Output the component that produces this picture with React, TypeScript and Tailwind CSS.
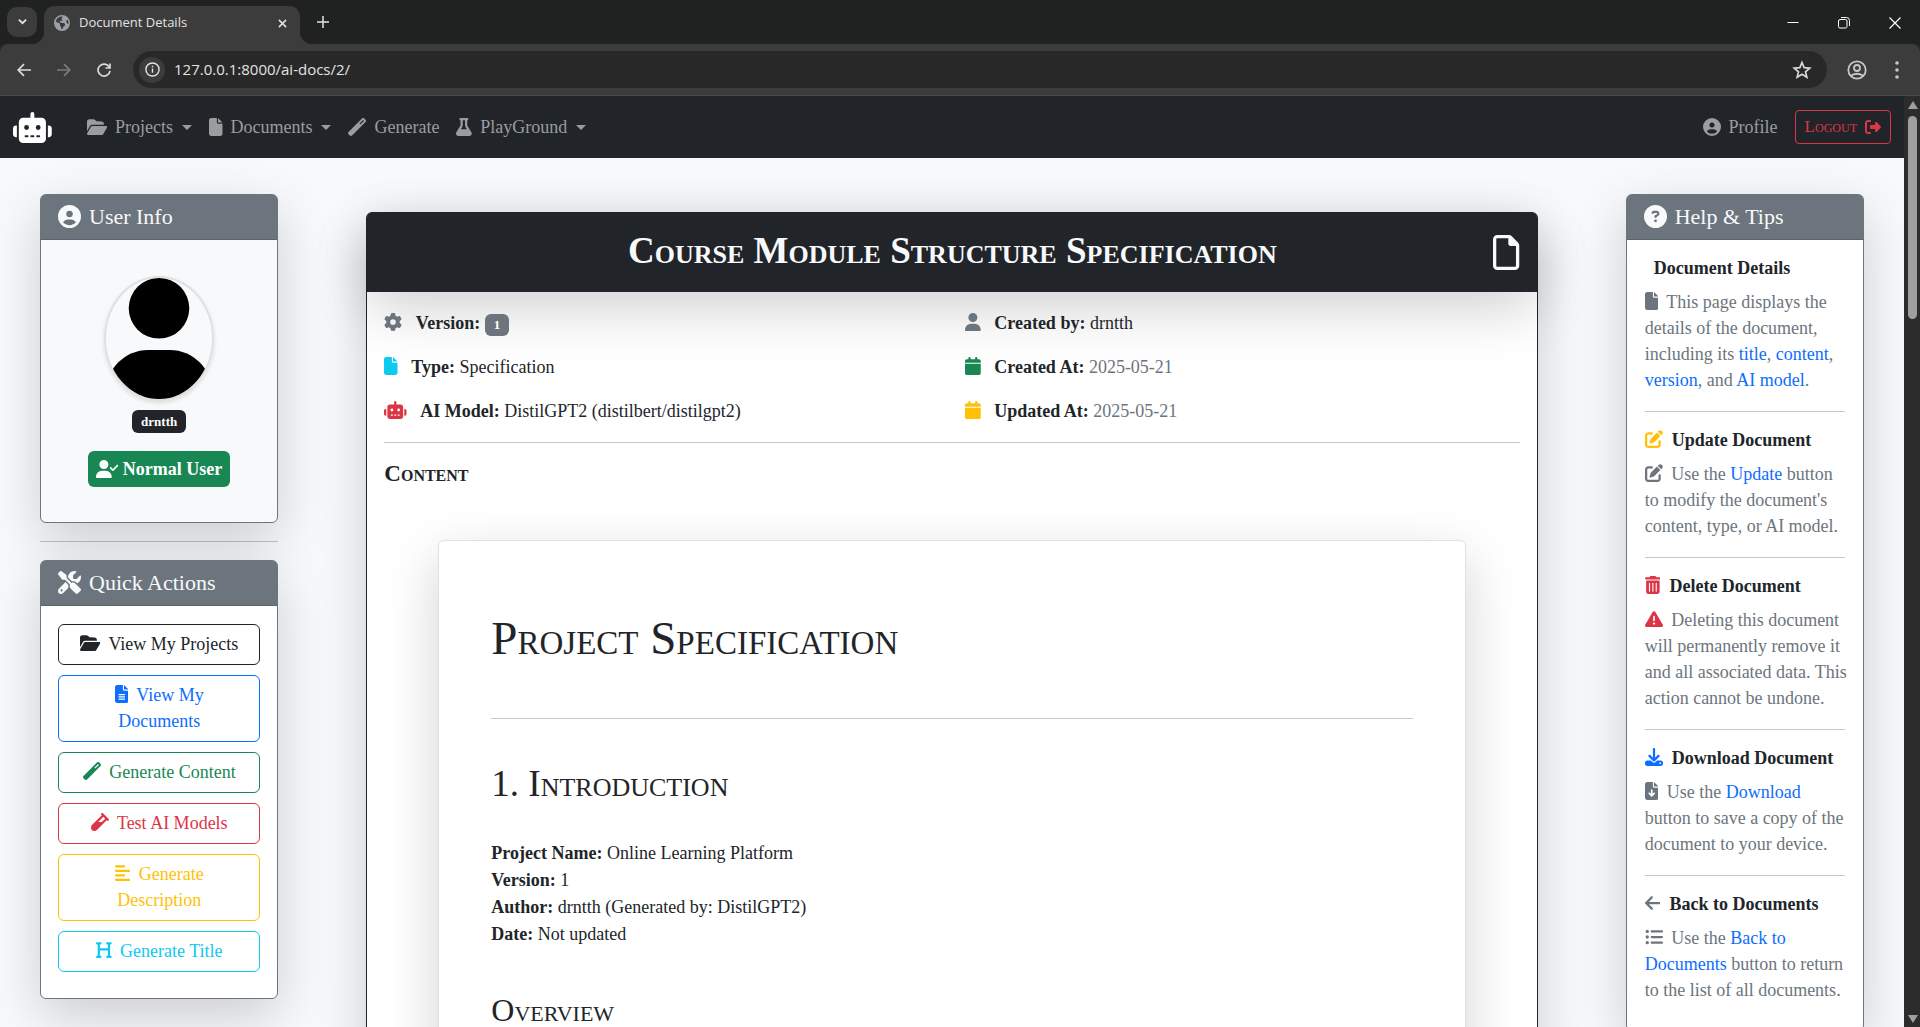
import type { ReactNode } from 'react';
import type { IconType } from 'react-icons';
import {
  FaAlignLeft,
  FaArrowLeft,
  FaCalendar,
  FaCircleQuestion,
  FaCircleUser,
  FaDownload,
  FaEarthAmericas,
  FaFile,
  FaFileArrowDown,
  FaFileLines,
  FaFlask,
  FaFolderOpen,
  FaGear,
  FaHeading,
  FaListUl,
  FaPenToSquare,
  FaRegFile,
  FaRightFromBracket,
  FaRobot,
  FaScrewdriverWrench,
  FaTrashCan,
  FaTriangleExclamation,
  FaUser,
  FaUserCheck,
  FaVial,
  FaWandMagic,
} from 'react-icons/fa6';

const cardShadow = 'shadow-[0_18px_53px_rgba(0,0,0,0.175)]';

function Icon({ as: Glyph, className = '' }: { as: IconType; className?: string }) {
  return <Glyph aria-hidden size="auto" className={`inline-block h-[18px] w-auto align-[-2px] ${className}`} />;
}

function BrowserBar() {
  return (
    <header className="shrink-0 bg-[#202221] font-['Open_Sans',sans-serif] text-[#e3e3e3]">
      <div className="flex h-11 items-end">
        <button aria-label="Search tabs" className="mb-[7px] ml-[7px] flex h-[30px] w-[30px] items-center justify-center rounded-[10px] bg-[#3c3c3c]">
          <svg viewBox="0 0 10 6" className="w-[9px]" fill="none" stroke="currentColor" strokeWidth="2"><path d="M1 .7 5 4.7 9 .7" /></svg>
        </button>
        <div className="relative ml-[7px] flex h-[38px] w-64 items-center rounded-t-[10px] bg-[#3c3c3c] px-[10px] pb-1">
          <svg aria-hidden viewBox="0 0 12 12" className="absolute bottom-0 -left-3 w-3" fill="#3c3c3c"><path d="M12 0v12H0A12 12 0 0 0 12 0z" /></svg>
          <svg aria-hidden viewBox="0 0 12 12" className="absolute -right-3 bottom-0 w-3" fill="#3c3c3c"><path d="M0 0v12h12A12 12 0 0 1 0 0z" /></svg>
          <FaEarthAmericas aria-hidden className="h-4 w-4 text-[#9aa0a6]" />
          <span className="ml-[9px] flex-1 text-[13px]">Document Details</span>
          <button aria-label="Close tab" className="p-[3px]">
            <svg viewBox="0 0 10 10" className="w-[9px]" stroke="currentColor" strokeWidth="1.7"><path d="M1 1 9 9M9 1 1 9" /></svg>
          </button>
        </div>
        <button aria-label="New tab" className="mb-4 ml-[17px]">
          <svg viewBox="0 0 12 12" className="w-3" stroke="currentColor" strokeWidth="1.5"><path d="M6 0V12M0 6H12" /></svg>
        </button>
        <div className="mb-[15px] ml-auto flex items-center">
          <button aria-label="Minimize" className="flex w-[51px] justify-center">
            <svg viewBox="0 0 12 12" className="w-3" stroke="#fff"><path d="M.5 5.5h11" /></svg>
          </button>
          <button aria-label="Restore" className="flex w-[51px] justify-center">
            <svg viewBox="0 0 12 12" className="w-3" fill="none" stroke="#fff"><rect x=".5" y="2.5" width="8.5" height="8.5" rx="1.5" /><path d="M3 .5h5.5a3 3 0 0 1 3 3V9" /></svg>
          </button>
          <button aria-label="Close window" className="flex w-[51px] justify-center">
            <svg viewBox="0 0 12 12" className="w-3" stroke="#fff" strokeWidth="1.2"><path d="M.5.5l11 11M11.5.5l-11 11" /></svg>
          </button>
        </div>
      </div>
      <div className="flex h-[52px] items-center rounded-t-lg border-b border-[#4a4a4a] bg-[#3c3c3c] pr-[13px] pl-[15px]">
        <button aria-label="Back" className="p-[2px]">
          <svg viewBox="0 0 14 14" className="w-[14px]" fill="none" stroke="#dadada" strokeWidth="1.7"><path d="M14 7H1.5M7 1.2 1.2 7 7 12.8" /></svg>
        </button>
        <button aria-label="Forward" className="ml-[22px] p-[2px]">
          <svg viewBox="0 0 14 14" className="w-[14px]" fill="none" stroke="#7c7c7c" strokeWidth="1.7"><path d="M0 7h12.5M7 1.2 12.8 7 7 12.8" /></svg>
        </button>
        <button aria-label="Reload" className="ml-[22px] p-[2px]">
          <svg viewBox="0 0 14 14" className="w-[14px]" fill="none" stroke="#dadada" strokeWidth="1.7"><path d="M12.3 4.2A6 6 0 1 0 13 7.8M13 .5V5H8.5" /></svg>
        </button>
        <div className="ml-[20px] flex h-[37px] flex-1 items-center rounded-full bg-[#282828] pr-[15px] pl-[6px]">
          <button aria-label="Site information" className="flex h-[26px] w-[26px] items-center justify-center rounded-full bg-[#3c3c3c]">
            <svg viewBox="0 0 16 16" className="w-[15px]" fill="none" stroke="#e3e3e3" strokeWidth="1.5"><circle cx="8" cy="8" r="7" /><path d="M8 7v4.5M8 4v1.6" /></svg>
          </button>
          <input aria-label="Address" defaultValue="127.0.0.1:8000/ai-docs/2/" className="ml-[9px] min-w-0 flex-1 bg-transparent text-[15px] text-[#e3e3e3] outline-none" />
          <button aria-label="Bookmark this page">
            <svg viewBox="0 0 24 24" className="w-5" fill="none" stroke="#dadada" strokeWidth="2"><path d="m12 3 2.6 6.2 6.7.5-5.1 4.4 1.6 6.5L12 17.1l-5.8 3.5 1.6-6.5-5.1-4.4 6.7-.5z" /></svg>
          </button>
        </div>
        <button aria-label="You" className="ml-5">
          <svg viewBox="0 0 20 20" className="w-5" fill="none" stroke="#c7c7c7" strokeWidth="1.8"><circle cx="10" cy="10" r="8.7" /><circle cx="10" cy="8" r="3" /><path d="M3.8 16c3-3 9.4-3 12.4 0" /></svg>
        </button>
        <button aria-label="Browser menu" className="ml-5 px-2">
          <svg viewBox="0 0 4 18" className="h-[18px]" fill="#c7c7c7"><circle cx="2" cy="2" r="1.8" /><circle cx="2" cy="9" r="1.8" /><circle cx="2" cy="16" r="1.8" /></svg>
        </button>
      </div>
    </header>
  );
}

function NavItem({ icon, label, menu }: { icon: IconType; label: string; menu?: boolean }) {
  return (
    <a href="#" className="flex items-center">
      <Icon as={icon} />
      <span className="ml-2">{label}</span>
      {menu && <span className="ml-[9px] border-x-[5px] border-t-[5px] border-x-transparent border-t-current" />}
    </a>
  );
}

function Navbar() {
  return (
    <nav className="flex h-[62px] items-center bg-[#212529] px-[13px] text-lg text-[#9a9c9e]">
      <a href="#" aria-label="Home" className="text-white">
        <FaRobot size="auto" className="h-[31px] w-auto" />
      </a>
      <div className="ml-[35px] flex items-center gap-[17px]">
        <NavItem icon={FaFolderOpen} label="Projects" menu />
        <NavItem icon={FaFile} label="Documents" menu />
        <NavItem icon={FaWandMagic} label="Generate" />
        <NavItem icon={FaFlask} label="PlayGround" menu />
      </div>
      <div className="ml-auto flex items-center gap-[17px]">
        <NavItem icon={FaCircleUser} label="Profile" />
        <button className="flex h-[34px] items-center gap-2 rounded-[4px] border border-[#dc3545] px-[9px] text-[17px] text-[#dc3545] [font-variant:small-caps]">
          Logout
          <FaRightFromBracket aria-hidden size="auto" className="h-4 w-auto" />
        </button>
      </div>
    </nav>
  );
}

function SideCard({ icon: Glyph, title, className = 'bg-white', children }: { icon: IconType; title: string; className?: string; children: ReactNode }) {
  return (
    <section className={`rounded-[6px] border border-[#6c757d] ${cardShadow} ${className}`}>
      <h2 className="flex h-[45px] items-center gap-2 rounded-t-[4px] border-b border-[#5b636a] bg-[#6c757d] px-[17px] pb-px text-[22px] leading-[26px] text-[#f8f9fa]">
        <Glyph aria-hidden size="auto" className="h-[23px] w-auto" />
        {title}
      </h2>
      {children}
    </section>
  );
}

function UserInfo() {
  return (
    <SideCard icon={FaCircleUser} title="User Info" className="bg-[#f8f9fa]">
      <div className="flex flex-col items-center pt-9 pb-[35px] font-bold text-white">
        <svg role="img" aria-label="Avatar of drntth" viewBox="0 0 448 512" className="w-[110px] rounded-[50%] border-2 border-[#dee0e1] text-black shadow-[0_2px_4px_rgba(0,0,0,0.12)]" fill="currentColor">
          <circle cx="224" cy="128" r="128" />
          <path d="M178.3 304C79.8 304 0 383.8 0 482.3 0 498.7 13.3 512 29.7 512h388.6c16.4 0 29.7-13.3 29.7-29.7 0-98.5-79.8-178.3-178.3-178.3z" />
        </svg>
        <span className="mt-[9px] rounded-[6px] bg-[#212529] px-[9px] py-1 text-[13px] leading-[15px]">drntth</span>
        <span className="mt-[18px] flex h-9 items-center gap-1 rounded-[6px] bg-[#198754] px-2 text-lg">
          <Icon as={FaUserCheck} />
          Normal User
        </span>
      </div>
    </SideCard>
  );
}

const actions: { icon: IconType; label: string; tone: string }[] = [
  { icon: FaFolderOpen, label: 'View My Projects', tone: 'border-[#212529] text-[#212529]' },
  { icon: FaFileLines, label: 'View My Documents', tone: 'border-[#0d6efd] text-[#0d6efd]' },
  { icon: FaWandMagic, label: 'Generate Content', tone: 'border-[#198754] text-[#198754]' },
  { icon: FaVial, label: 'Test AI Models', tone: 'border-[#dc3545] text-[#dc3545]' },
  { icon: FaAlignLeft, label: 'Generate Description', tone: 'border-[#ffc107] text-[#ffc107]' },
  { icon: FaHeading, label: 'Generate Title', tone: 'border-[#0dcaf0] text-[#0dcaf0]' },
];

function QuickActions() {
  return (
    <SideCard icon={FaScrewdriverWrench} title="Quick Actions">
      <div className="flex flex-col gap-[10px] px-[17px] pt-[18px] pb-[26px]">
        {actions.map((a) => (
          <button key={a.label} className={`rounded-[6px] border px-[13px] pt-[6px] pb-[7px] text-center ${a.tone}`}>
            <Icon as={a.icon} className="mr-1" /> {a.label}
          </button>
        ))}
      </div>
    </SideCard>
  );
}

function Rule({ className = '' }: { className?: string }) {
  return <hr className={`border-[#212529]/25 ${className}`} />;
}

function Tip({ icon, iconTone = 'text-[#6c757d]', title, textIcon, textTone = '', children }: { icon?: IconType; iconTone?: string; title: string; textIcon: IconType; textTone?: string; children: ReactNode }) {
  return (
    <article>
      <h3 className="mb-[10px] leading-[21px] font-bold text-[#212529]">
        {icon && <Icon as={icon} className={iconTone} />}
        <span className="ml-[9px]">{title}</span>
      </h3>
      <p className="whitespace-nowrap text-[#6c757d]">
        <Icon as={textIcon} className={`mr-1 ${textTone}`} /> {children}
      </p>
    </article>
  );
}

function Ref({ children }: { children: ReactNode }) {
  return <span className="text-[#0d6efd]">{children}</span>;
}

function HelpTips() {
  return (
    <SideCard icon={FaCircleQuestion} title="Help & Tips">
      <div className="px-[18px] pt-[18px] pb-[27px]">
        <Tip title="Document Details" textIcon={FaFile}>
          This page displays the<br />details of the document,<br />including its <Ref>title</Ref>, <Ref>content</Ref>,<br />
          <Ref>version</Ref>, and <Ref>AI model</Ref>.
        </Tip>
        <Rule className="my-[18px]" />
        <Tip icon={FaPenToSquare} iconTone="text-[#ffc107]" title="Update Document" textIcon={FaPenToSquare}>
          Use the <Ref>Update</Ref> button<br />to modify the document's<br />content, type, or AI model.
        </Tip>
        <Rule className="my-[18px]" />
        <Tip icon={FaTrashCan} iconTone="text-[#dc3545]" title="Delete Document" textIcon={FaTriangleExclamation} textTone="text-[#dc3545]">
          Deleting this document<br />will permanently remove it<br />and all associated data. This<br />action cannot be undone.
        </Tip>
        <Rule className="my-[18px]" />
        <Tip icon={FaDownload} iconTone="text-[#0d6efd]" title="Download Document" textIcon={FaFileArrowDown}>
          Use the <Ref>Download</Ref><br />button to save a copy of the<br />document to your device.
        </Tip>
        <Rule className="my-[18px]" />
        <Tip icon={FaArrowLeft} title="Back to Documents" textIcon={FaListUl}>
          Use the <Ref>Back to</Ref><br /><Ref>Documents</Ref> button to return<br />to the list of all documents.
        </Tip>
      </div>
    </SideCard>
  );
}

function Field({ icon, tone, label, children }: { icon: IconType; tone: string; label: string; children: ReactNode }) {
  return (
    <p>
      <Icon as={icon} className={`mr-[9px] ${tone}`} /> <strong>{label}</strong> {children}
    </p>
  );
}

function DocumentCard() {
  return (
    <article className={`rounded-[6px] border border-[#212529] bg-white pb-12 ${cardShadow}`}>
      <header className={`flex h-[79px] items-center rounded-t-[4px] bg-[#212529] px-[17px] text-[#f8f9fa] ${cardShadow}`}>
        <h1 className="flex-1 pb-1 pl-[27px] text-center text-[37px] leading-[42px] font-bold [font-variant:small-caps]">Course Module Structure Specification</h1>
        <FaRegFile aria-hidden size="auto" className="h-[35px] w-auto" />
      </header>
      <div className="px-[17px] pt-[18px]">
        <div className="grid grid-cols-2 gap-x-[26px] gap-y-[18px]">
          <Field icon={FaGear} tone="text-[#6c757d]" label="Version:">
            <span className="inline-block rounded-[6px] bg-[#6c757d] px-[9px] py-1 text-[13px] leading-[14px] font-bold text-white">1</span>
          </Field>
          <Field icon={FaUser} tone="text-[#6c757d]" label="Created by:">drntth</Field>
          <Field icon={FaFile} tone="text-[#0dcaf0]" label="Type:">Specification</Field>
          <Field icon={FaCalendar} tone="text-[#198754]" label="Created At:"><time className="text-[#6c757d]">2025-05-21</time></Field>
          <Field icon={FaRobot} tone="text-[#dc3545]" label="AI Model:">DistilGPT2 (distilbert/distilgpt2)</Field>
          <Field icon={FaCalendar} tone="text-[#ffc107]" label="Updated At:"><time className="text-[#6c757d]">2025-05-21</time></Field>
        </div>
        <Rule className="my-[18px]" />
        <h2 className="text-[23px] leading-[26px] font-bold [font-variant:small-caps]">Content</h2>
        <div className={`mx-[54px] mt-[53px] rounded-[6px] border border-[#dee2e6] bg-white px-[52px] pt-[71px] pb-[53px] ${cardShadow}`}>
          <h1 className="text-[47px] leading-[53px] [font-variant:small-caps]">Project Specification</h1>
          <Rule className="mt-[53px] mb-[44px]" />
          <h2 className="mb-[35px] text-[37px] leading-[42px] [font-variant:small-caps]">1. Introduction</h2>
          <p className="mb-[44px] leading-[27px]">
            <strong>Project Name:</strong> Online Learning Platform<br />
            <strong>Version:</strong> 1<br />
            <strong>Author:</strong> drntth (Generated by: DistilGPT2)<br />
            <strong>Date:</strong> Not updated
          </p>
          <h3 className="text-[32px] leading-[37px] [font-variant:small-caps]">Overview</h3>
        </div>
      </div>
    </article>
  );
}

function ScrollBar() {
  return (
    <div aria-hidden className="flex w-4 shrink-0 flex-col items-center bg-[#2c2c2c] pt-[5px] pb-[4px] pl-px">
      <span className="border-x-[5px] border-b-8 border-x-transparent border-b-[#9f9f9f]" />
      <span className="mt-[7px] h-[22%] w-[9px] rounded-full bg-[#9f9f9f]" />
      <span className="mt-auto border-x-[5px] border-t-8 border-x-transparent border-t-[#9f9f9f]" />
    </div>
  );
}

export default function App() {
  return (
    <div className="flex h-screen flex-col overflow-hidden">
      <BrowserBar />
      <div className="flex min-h-0 flex-1">
        <div className="min-w-0 flex-1 overflow-hidden bg-[#f8f9fa] font-['Liberation_Serif','Times_New_Roman',serif] text-lg leading-[26px] text-[#212529]">
          <div className="relative z-10">
            <Navbar />
          </div>
          <main className="grid grid-cols-12 items-start">
            <aside className="col-span-2 pt-9 pr-[39px] pl-10">
              <UserInfo />
              <Rule className="my-[18px]" />
              <QuickActions />
            </aside>
            <div className="col-span-8 px-[49px] pt-[54px]">
              <DocumentCard />
            </div>
            <aside className="col-span-2 pt-9 pr-10 pl-[39px]">
              <HelpTips />
            </aside>
          </main>
        </div>
        <ScrollBar />
      </div>
    </div>
  );
}
